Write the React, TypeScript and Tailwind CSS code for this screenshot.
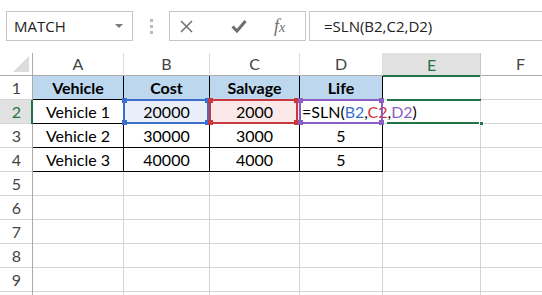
import React from "react";

const cols = [
  { key: "A", w: "w-[91px]" },
  { key: "B", w: "w-[86px]" },
  { key: "C", w: "w-[90px]" },
  { key: "D", w: "w-[83px]" },
  { key: "E", w: "w-[98px]" },
  { key: "F", w: "w-[80px]" },
];

const data: string[][] = [
  ["Vehicle", "Cost", "Salvage", "Life"],
  ["Vehicle 1", "20000", "2000", ""],
  ["Vehicle 2", "30000", "3000", "5"],
  ["Vehicle 3", "40000", "4000", "5"],
];

function Handles({ color }: { color: string }) {
  const spots = [
    { k: "tl", c: "-left-[3px] -top-[3px]" },
    { k: "tr", c: "-right-[3px] -top-[3px]" },
    { k: "bl", c: "-left-[3px] -bottom-[3px]" },
    { k: "br", c: "-right-[3px] -bottom-[3px]" },
  ];
  return (
    <>
      {spots.map((s) => (
        <span key={s.k} className={`absolute w-[5px] h-[5px] ${s.c} ${color}`} />
      ))}
    </>
  );
}

function FormulaBar() {
  return (
    <div className="flex items-start h-[53px] pt-[11px] font-['Open_Sans',sans-serif]">
      <div className="ml-[6px] w-[127px] h-[30px] shrink-0 border border-[#c6c6c6] flex items-center justify-between pl-[7px] pr-[9px]">
        <span className="text-[15px] text-[#222]">MATCH</span>
        <svg width="8" height="4" viewBox="0 0 8 4">
          <path d="M0 0 L8 0 L4 4 Z" fill="#7a7a7a" />
        </svg>
      </div>
      <div className="ml-[17px] mt-[8px] flex flex-col gap-[3px]">
        <span className="w-[3px] h-[3px] bg-[#b9b9b9]" />
        <span className="w-[3px] h-[3px] bg-[#b9b9b9]" />
        <span className="w-[3px] h-[3px] bg-[#b9b9b9]" />
      </div>
      <div className="ml-[16px] w-[137px] h-[30px] shrink-0 border border-[#c6c6c6] flex items-center">
        <svg className="ml-[10px]" width="13" height="13" viewBox="0 0 13 13">
          <path d="M1 1 L12 12 M12 1 L1 12" stroke="#6e6e6e" strokeWidth="1.5" />
        </svg>
        <svg className="ml-[38px]" width="16" height="14" viewBox="0 0 16 14">
          <path d="M1.5 7.5 L6 12 L14.5 2" stroke="#6e6e6e" strokeWidth="3" fill="none" />
        </svg>
        <span className="ml-[27px] text-[18px] italic text-[#6e6e6e] font-['Liberation_Serif',serif] leading-none">
          f<span className="text-[14px]">x</span>
        </span>
      </div>
      <div className="ml-[3px] flex-1 h-[30px] border border-r-0 border-[#c6c6c6] flex items-center pl-[14px]">
        <span className="text-[15px] text-[#222]">=SLN(B2,C2,D2)</span>
      </div>
    </div>
  );
}

function HeaderRow() {
  return (
    <div className="flex h-[23px]">
      <div className="w-[33px] shrink-0 h-full border-r border-b border-[#ababab] flex items-end justify-end pr-[3px] pb-[3px]">
        <svg width="16" height="16" viewBox="0 0 16 16">
          <path d="M16 0 L16 16 L0 16 Z" fill="#dcdcdc" />
        </svg>
      </div>
      {cols.map((c) =>
        c.key === "E" ? (
          <div
            key={c.key}
            className={`${c.w} shrink-0 h-full bg-[#e1e1e1] border-r border-[#c6c6c6] relative flex items-center justify-center text-[#217346]`}
          >
            E
            <span className="absolute left-0 right-0 bottom-[-1px] h-[2px] bg-[#217346]" />
          </div>
        ) : (
          <div
            key={c.key}
            className={`${c.w} shrink-0 h-full border-r border-b border-r-[#dcdcdc] border-b-[#ababab] flex items-center justify-center text-[#444]`}
          >
            {c.key}
          </div>
        )
      )}
    </div>
  );
}

function Row({ n }: { n: number }) {
  const vals = data[n - 1];
  const active = n === 2;
  return (
    <div className="flex h-[24px] shrink-0">
      <div
        className={`w-[33px] shrink-0 h-full border-b border-[#d4d4d4] flex items-center justify-center relative ${
          active ? "bg-[#e1e1e1] text-[#217346]" : "text-[#444]"
        }`}
      >
        {n < 10 ? n : null}
        <span
          className={`absolute right-0 top-0 bottom-[-1px] ${
            active ? "w-[2px] bg-[#217346]" : "w-[1px] bg-[#ababab]"
          }`}
        />
      </div>
      {cols.map((c, ci) => {
        const inTable = vals && ci < 4;
        const border = inTable ? "border-black" : "border-[#d4d4d4]";
        let bg = "";
        if (n === 1 && ci < 4) bg = "bg-[#bdd7ee] font-bold";
        if (active && ci === 1) bg = "bg-[#e9eef8]";
        if (active && ci === 2) bg = "bg-[#fbe9ea]";
        const isFormula = active && ci === 3;
        return (
          <div
            key={c.key}
            className={`${c.w} shrink-0 h-full border-r border-b ${border} ${bg} relative flex items-center ${
              isFormula ? "justify-start pl-[2px]" : "justify-center"
            }`}
          >
            {isFormula ? (
              <span className="whitespace-nowrap relative z-10">
                =SLN(<span className="text-[#3a6fcb]">B2</span>,<span className="text-[#d13438]">C2</span>,<span className="text-[#8b5ec6]">D2</span>)
              </span>
            ) : (
              inTable && vals[ci]
            )}
            {active && ci === 1 && (
              <span className="absolute -left-[1px] -top-[1px] right-0 -bottom-[1px] border-2 border-[#3a6fcb] z-20">
                <Handles color="bg-[#3a6fcb]" />
              </span>
            )}
            {active && ci === 2 && (
              <span className="absolute -left-[1px] -top-[1px] right-[1px] -bottom-[1px] border-2 border-[#c8383f] z-20">
                <Handles color="bg-[#c8383f]" />
              </span>
            )}
            {active && ci === 3 && (
              <span className="absolute -left-[1px] -top-[1px] -right-[1px] -bottom-[1px] border-2 border-[#8b5ec6] z-20">
                <Handles color="bg-[#8b5ec6]" />
              </span>
            )}
            {active && ci === 4 && (
              <span className="absolute left-[4px] -top-[1px] -right-[1px] -bottom-[1px] border-y-2 border-[#217346] z-20">
                <span className="absolute -right-[3px] -bottom-[4px] w-[5px] h-[5px] bg-[#217346] border border-white" />
              </span>
            )}
          </div>
        );
      })}
    </div>
  );
}

export default function App() {
  return (
    <div className="w-[542px] h-[295px] overflow-hidden bg-white font-['Lato',sans-serif] text-[16px] text-black">
      <FormulaBar />
      <HeaderRow />
      {[1, 2, 3, 4, 5, 6, 7, 8, 9, 10].map((n) => (
        <Row key={n} n={n} />
      ))}
    </div>
  );
}
